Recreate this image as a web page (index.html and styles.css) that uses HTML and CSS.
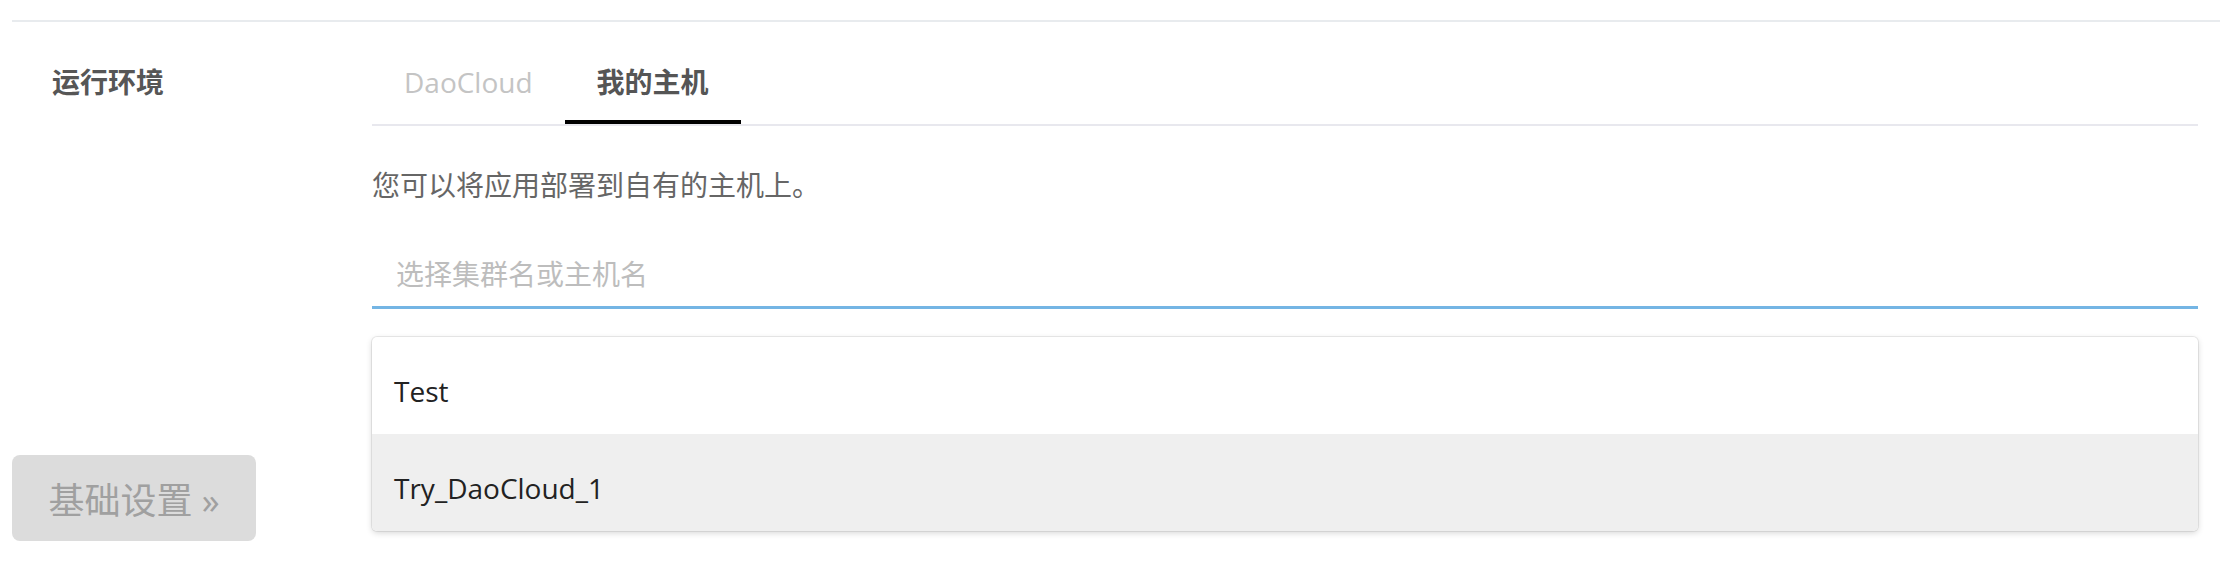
FILE: index.html
```html
<!DOCTYPE html>
<html lang="zh-CN">
<head>
<meta charset="utf-8">
<title>运行环境</title>
<link rel="stylesheet" href="styles.css">
</head>
<body>
  <div class="page">
    <div class="top-divider"></div>
    <section class="env-row">
      <div class="side">
        <div class="side-label">运行环境</div>
        <button class="step-btn" type="button">基础设置 »</button>
      </div>
      <div class="main">
        <nav class="tabs">
          <span class="tab">DaoCloud</span>
          <span class="tab tab-active">我的主机</span>
        </nav>
        <p class="helper">您可以将应用部署到自有的主机上。</p>
        <input class="host-input" type="text" placeholder="选择集群名或主机名">
        <ul class="dropdown">
          <li class="dropdown-item">Test</li>
          <li class="dropdown-item dropdown-item-hover">Try_DaoCloud_1</li>
        </ul>
      </div>
    </section>
  </div>
</body>
</html>
```

FILE: styles.css
```css
* {
  box-sizing: border-box;
}

html, body {
  margin: 0;
  padding: 0;
  background: #ffffff;
}

body {
  font-family: "Open Sans", "Noto Sans CJK SC", sans-serif;
  font-size: 28px;
  color: #333;
}

.page {
  padding-top: 20px;
  width: 2220px;
}

.top-divider {
  margin-left: 12px;
  height: 2px;
  background: #e8ebee;
}

.env-row {
  display: flex;
}

.side {
  width: 372px;
  flex: none;
  display: flex;
  flex-direction: column;
  padding-top: 40px;
}

.side-label {
  margin-left: 52px;
  line-height: 40px;
  font-weight: 700;
  color: #565656;
}

.step-btn {
  margin-top: auto;
  margin-left: 12px;
  width: 244px;
  height: 86px;
  display: flex;
  align-items: center;
  justify-content: center;
  border: none;
  border-radius: 8px;
  background: #dcdcdc;
  color: #a0a0a0;
  font-family: "Open Sans", "Noto Sans CJK SC", sans-serif;
  font-size: 36px;
  padding: 0;
}

.main {
  flex: 1;
  padding-top: 40px;
  padding-right: 22px;
  padding-bottom: 10px;
}

.tabs {
  display: flex;
  border-bottom: 2px solid #e8e8ee;
}

.tab {
  line-height: 40px;
  padding: 0 32px 18px;
  border-bottom: 4px solid transparent;
  color: #c4c4c4;
}

.tab-active {
  color: #555;
  font-weight: 700;
  border-bottom-color: #000;
}

.helper {
  margin: 39px 0 0;
  line-height: 40px;
  color: #666;
}

.host-input {
  display: block;
  width: 100%;
  margin-top: 20px;
  height: 84px;
  padding: 29px 24px 12px;
  border: none;
  border-bottom: 3px solid #74b5e4;
  outline: none;
  font-family: "Open Sans", "Noto Sans CJK SC", sans-serif;
  font-size: 28px;
  color: #333;
  background: transparent;
}

.host-input::placeholder {
  color: #bdbdbd;
}

.dropdown {
  list-style: none;
  margin: 28px 0 0;
  padding: 0;
  border-radius: 5px;
  overflow: hidden;
  background: #fff;
  box-shadow: 0 0 0 1px rgba(0, 0, 0, 0.07), 0 2px 6px rgba(0, 0, 0, 0.16);
}

.dropdown-item {
  height: 97px;
  padding: 32px 22px 0;
  line-height: 44px;
  color: #222;
}

.dropdown-item-hover {
  background: #efefef;
}
```
